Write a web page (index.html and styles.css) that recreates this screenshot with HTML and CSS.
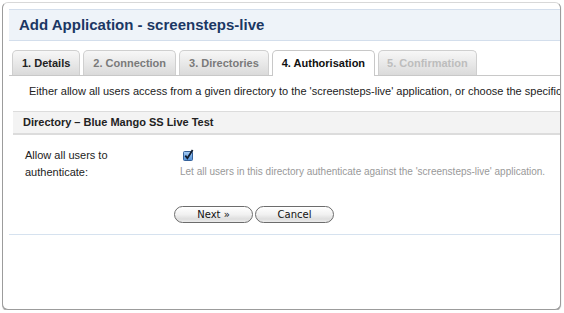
FILE: index.html
```html
<!doctype html>
<html>
<head>
<meta charset="utf-8">
<link rel="stylesheet" href="styles.css">
<title>Add Application - screensteps-live</title>
</head>
<body>
<div class="window">
<div class="page">

<h1 class="title">Add Application - screensteps-live</h1>

<ul class="tabs">
	<li class="tab done">1. Details</li>
	<li class="tab">2. Connection</li>
	<li class="tab">3. Directories</li>
	<li class="tab current">4. Authorisation</li>
	<li class="tab disabled">5. Confirmation</li>
</ul>

<p class="intro">Either allow all users access from a given directory to the 'screensteps-live' application, or choose the specific groups that are allowed to authenticate.</p>

<h3 class="section">Directory &ndash; Blue Mango SS Live Test</h3>

<div class="row">
	<label class="label">Allow all users to authenticate:</label>
	<div class="field">
		<span class="check">
			<svg width="11" height="12" viewBox="0 0 11 12">
				<defs>
					<linearGradient id="cb" x1="0" y1="0" x2="0" y2="1">
						<stop offset="0" stop-color="#a9cdf3"/>
						<stop offset="1" stop-color="#4f8fd8"/>
					</linearGradient>
				</defs>
				<rect x="0.5" y="2.5" width="9" height="9" rx="1" fill="url(#cb)" stroke="#35619a"/>
				<path d="M2.3 6.6 L4.4 9.2 L9.6 1" fill="none" stroke="#101c2e" stroke-width="1.8"/>
			</svg>
		</span>
		<span class="hint">Let all users in this directory authenticate against the 'screensteps-live' application.</span>
	</div>
</div>

<div class="actions">
	<button class="btn">Next &raquo;</button>
	<button class="btn">Cancel</button>
</div>

<hr class="rule" />

</div>
</div>
</body>
</html>
```

FILE: styles.css
```css
h1,
h3,
p,
ul {
    margin: 0;
    padding: 0;
}
body {
    margin: 2px 0 0 2px;
    background-color: white;
    font-family: "Liberation Sans", Arial, sans-serif;
    font-size: 11px;
    color: #222;
}
.window {
    width: 559px;
    height: 308px;
    box-sizing: border-box;
    border: 1px solid #9c9c9c;
    border-top-color: #d8d8d8;
    border-radius: 6px;
    box-shadow: 0 1px 1px rgba(0, 0, 0, 0.35);
    overflow: hidden;
    background: white;
}
.page {
    width: 640px;
    padding: 6px 0 0 6px;
}
.title {
    height: 30px;
    line-height: 30px;
    padding-left: 10px;
    font-size: 15px;
    color: #1b3764;
    background-color: #eef3f9;
    border-top: 1px solid #d3deec;
    border-bottom: 1px solid #d3deec;
}
.tabs {
    list-style: none;
    display: flex;
    gap: 3px;
    margin-top: 9px;
    padding-left: 3px;
    border-bottom: 1px solid #c8c8c8;
}
.tab {
    height: 24px;
    line-height: 25px;
    padding: 0 9px;
    font-weight: bold;
    color: #7a7a7a;
    border: 1px solid #cfcfcf;
    border-bottom: 0;
    border-radius: 5px 5px 0 0;
    background: linear-gradient(#f7f7f7, #e6e6e6 60%, #dadada);
}
.tab.done {
    color: #222;
}
.tab.current {
    color: #111;
    background: white;
    border-color: #c8c8c8;
    margin-bottom: -1px;
    height: 25px;
}
.tab.disabled {
    color: #bdbdbd;
    padding: 0 8px;
}
.intro {
    margin-top: 8px;
    padding-left: 20px;
    white-space: nowrap;
    line-height: 14px;
}
.section {
    margin: 13px 0 0 4px;
    height: 21px;
    line-height: 21px;
    padding-left: 10px;
    font-size: 11px;
    background-color: #f3f3f3;
    border-top: 1px solid #dcdcdc;
    border-bottom: 2px solid #dcdcdc;
}
.row {
    display: flex;
    margin-top: 12px;
    padding-left: 16px;
}
.label {
    width: 95px;
    margin-right: 60px;
    line-height: 17px;
}
.field {
    display: flex;
    flex-direction: column;
    padding-top: 2px;
}
.check {
    height: 12px;
    padding-left: 3px;
}
.check svg {
    display: block;
}
.hint {
    margin-top: 5px;
    font-size: 10px;
    color: #999;
}
.actions {
    display: flex;
    gap: 2px;
    margin-top: 25px;
    padding-left: 165px;
}
.btn {
    width: 79px;
    height: 17px;
    padding: 0;
    font-family: "DejaVu Sans", sans-serif;
    font-size: 10px;
    color: #111;
    border: 1px solid #6c6c6c;
    border-radius: 9px;
    background: linear-gradient(#ffffff, #f1f1f1 50%, #dedede 80%, #ececec);
    box-shadow: inset 0 1px 0 #fff;
}
.rule {
    margin: 11px 0 0 0;
    border: 0;
    border-top: 1px solid #d6e2ef;
}
```
